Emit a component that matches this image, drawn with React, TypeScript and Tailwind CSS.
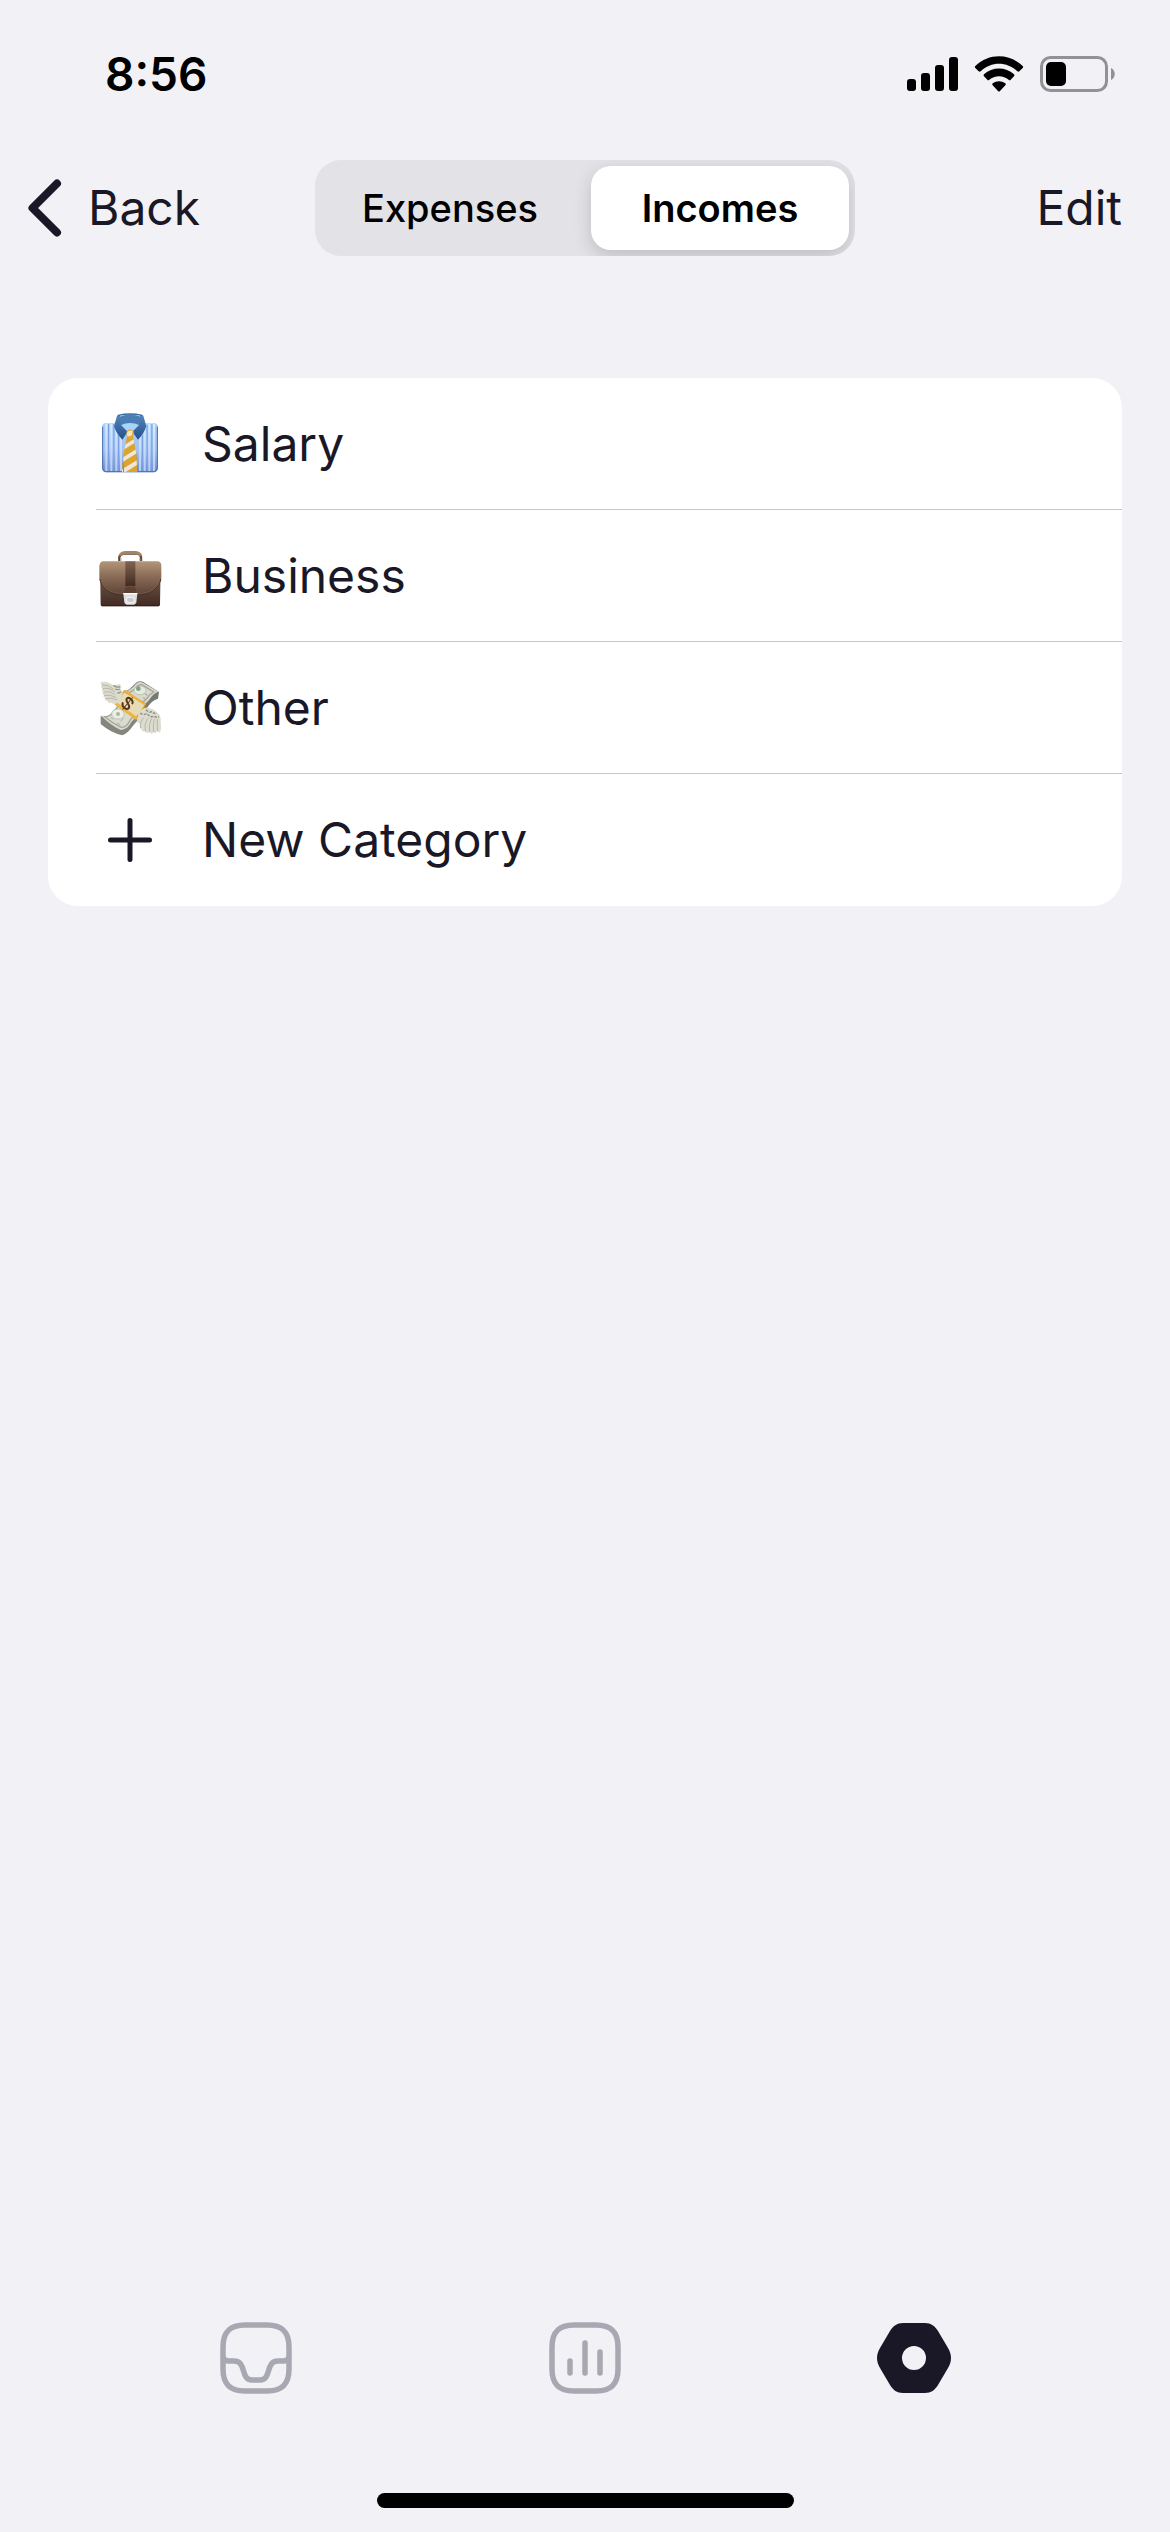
import React from "react";

function SignalIcon() {
  return (
    <svg width="51" height="34" viewBox="0 0 51 34" aria-hidden="true">
      <rect x="0" y="22" width="9" height="12" rx="3" />
      <rect x="14" y="16" width="9" height="18" rx="3" />
      <rect x="28" y="8" width="9" height="26" rx="3" />
      <rect x="42" y="0" width="9" height="34" rx="3" />
    </svg>
  );
}

function WifiIcon() {
  return (
    <svg width="50" height="36" viewBox="0 0 150 108" aria-hidden="true">
      <path d="M4 30C44 -9 106 -9 146 30Q149 33 146 36L136 46Q133 48 130 46C99 16 51 16 20 46Q17 48 14 46L4 36Q1 33 4 30Z" />
      <path d="M30 55C55 32 95 32 120 55Q123 58 120 61L110 71Q107 74 104 71C88 57 62 57 46 71Q43 74 40 71L30 61Q27 58 30 55Z" />
      <path d="M56 82C67 74 83 74 94 82Q97 85 94 88L78 105Q75 108 72 105L56 88Q53 85 56 82Z" />
    </svg>
  );
}

function BatteryIcon() {
  return (
    <svg width="76" height="36" viewBox="0 0 76 36" aria-hidden="true">
      <rect x="1.5" y="1.5" width="65" height="33" rx="9" fill="none" stroke="#929295" strokeWidth="3" />
      <rect x="6" y="6" width="20" height="24" rx="5" />
      <path d="M71 12C76 14 76 22 71 24Z" fill="#929295" />
    </svg>
  );
}

function ShirtIcon() {
  return (
    <svg width="64" height="64" viewBox="53 36 192 192" aria-hidden="true">
      <defs>
        <linearGradient id="shirt" x1="0" y1="0" x2="0" y2="1">
          <stop offset="0" stopColor="#a9d0fb" />
          <stop offset="0.55" stopColor="#a3c3f3" />
          <stop offset="1" stopColor="#6f8fcf" />
        </linearGradient>
        <linearGradient id="stripe" x1="0" y1="0" x2="0" y2="1">
          <stop offset="0" stopColor="#d4ecff" />
          <stop offset="1" stopColor="#b9cdf6" />
        </linearGradient>
        <linearGradient id="collar" x1="0" y1="0" x2="0" y2="1">
          <stop offset="0" stopColor="#5586ba" />
          <stop offset="1" stopColor="#244f8b" />
        </linearGradient>
        <clipPath id="tie">
          <path d="M140 110H158L168 160L173 216H125L130 160Z" />
        </clipPath>
      </defs>
      <path d="M74 70H223Q233 71 233 82V204Q232 216 221 217H76Q66 216 65 204V82Q65 71 74 70Z" fill="url(#shirt)" />
      <path d="M75 72h6v143h-6zM90 72h6v143h-6zM105 76h6v139h-6zM119 106h6v109h-6zM176 106h6v109h-6zM190 76h6v139h-6zM204 72h6v143h-6zM218 72h6v143h-6z" fill="url(#stripe)" />
      <path d="M83 72h3v143h-3zM99 72h3v143h-3zM113 106h3v109h-3zM185 106h3v109h-3zM199 76h3v139h-3zM213 72h3v143h-3z" fill="#7c9fe0" />
      <path d="M67 80V204Q68 214 77 215H221Q230 213 231 204V80" fill="none" stroke="#496ba9" strokeWidth="3" />
      <path d="M113 52Q149 35 186 52L178 77L149 91L119 77Z" fill="#4b7eb5" />
      <path d="M121 76Q149 62 178 76L158 92H140Z" fill="#a7d4fa" />
      <path d="M110 47Q115 42 119 46L121 74L142 95L126 119Q108 101 101 79Z" fill="url(#collar)" />
      <path d="M189 47Q184 42 179 46L177 74L156 95L173 119Q191 101 198 79Z" fill="url(#collar)" />
      <path d="M114 46Q149 38 185 46" fill="none" stroke="#356aa5" strokeWidth="4" />
      <path d="M140 110H158L168 160L173 216H125L130 160Z" fill="#d9a52e" />
      <g clipPath="url(#tie)">
        <path d="M120 143L167 113V126L120 155ZM120 177L174 143V157L120 191ZM120 211L177 176V190L130 220H120Z" fill="#eee6d8" />
        <path d="M126 170L130 217M170 160L172 217" stroke="#b77c18" strokeWidth="3" />
      </g>
      <path d="M139 94Q149 82 160 94Q162 105 156 115Q149 119 142 114Q136 104 139 94Z" fill="#dfaa32" />
      <path d="M140 98Q148 87 157 94L155 104Q149 111 141 108Z" fill="#f1e4c5" />
    </svg>
  );
}

function BriefcaseIcon() {
  return (
    <svg width="64" height="64" viewBox="53 27 192 192" aria-hidden="true">
      <defs>
        <linearGradient id="flap" x1="0" y1="0" x2="0" y2="1">
          <stop offset="0" stopColor="#b29679" />
          <stop offset="0.45" stopColor="#8a6b57" />
          <stop offset="1" stopColor="#5c4337" />
        </linearGradient>
        <linearGradient id="bag" x1="0" y1="0" x2="0" y2="1">
          <stop offset="0" stopColor="#8a6d58" />
          <stop offset="1" stopColor="#3f2a23" />
        </linearGradient>
        <linearGradient id="strap" x1="0" y1="0" x2="0" y2="1">
          <stop offset="0" stopColor="#806351" />
          <stop offset="1" stopColor="#3f2a20" />
        </linearGradient>
      </defs>
      <path d="M117 78V66Q120 56 131 56H169Q180 56 182 66V78" fill="none" stroke="#5c4638" strokeWidth="7" />
      <path d="M114 64Q118 49 134 48H166Q182 49 186 64L176 62Q171 57 162 57H138Q129 57 124 62Z" fill="#a98262" />
      <path d="M122 77v-7M178 77v-7" stroke="#c6bdb4" strokeWidth="4" />
      <path d="M66 82H234Q241 85 241 94L239 209Q239 214 233 214H67Q61 214 61 209L59 94Q59 85 66 82Z" fill="url(#bag)" />
      <path d="M66 79H234Q243 82 243 92V128Q236 174 184 180H116Q64 174 57 128V92Q58 82 66 79Z" fill="url(#flap)" />
      <path d="M58 132Q68 174 116 180H184Q232 174 242 132" fill="none" stroke="#443027" strokeWidth="3" />
      <path d="M61 137Q71 169 116 175H184Q229 169 239 137" fill="none" stroke="#8d7161" strokeWidth="1" />
      <path d="M135 79H165V154H135Z" fill="url(#strap)" />
      <path d="M130 177V166Q133 154 143 154H157Q168 154 170 166V177Z" fill="#5c4033" stroke="#765746" strokeWidth="2" />
      <path d="M129 175H171L168 202Q167 208 161 209H139Q133 208 132 202Z" fill="#dedfdf" />
      <rect x="138" y="187" width="24" height="16" rx="8" fill="#c9cbcb" stroke="#f6f6f6" strokeWidth="3" />
      <path d="M129 176H171" stroke="#fff" strokeWidth="4" />
      <path d="M64 212H236" stroke="#30201b" strokeWidth="3" />
    </svg>
  );
}

function MoneyIcon() {
  return (
    <svg width="64" height="64" viewBox="53 33 192 192" aria-hidden="true">
      <path d="M61 152Q80 165 95 144Q112 123 131 104L190 153Q170 166 158 182Q144 203 126 211Q91 203 61 177Z" fill="#85877e" />
      <path d="M131 82Q151 72 164 56Q174 45 189 51L236 81L233 101Q217 105 207 119L187 145Z" fill="#777a72" />
      <path d="M61 151Q80 162 96 140Q110 118 128 103L177 151Q158 161 149 178Q139 194 121 195Q91 182 61 151Z" fill="#dadbd1" />
      <path d="M133 83Q152 75 166 58Q174 48 188 53L234 80Q217 87 208 103Q199 117 184 119Z" fill="#d7d8ce" />
      <path d="M73 155Q88 156 101 139L121 116L163 151Q149 163 143 176Q136 187 122 187Q97 175 73 155Z" fill="none" stroke="#a3a69b" strokeWidth="4" />
      <path d="M145 83Q160 78 173 61L185 59L220 81Q206 88 199 101Q191 112 180 111Z" fill="none" stroke="#a3a69b" strokeWidth="4" />
      <ellipse cx="113" cy="147" rx="19" ry="15" fill="#eeeee4" stroke="#aeb0a4" strokeWidth="2" />
      <circle cx="113" cy="147" r="6" fill="#a4baa2" />
      <path d="M91 157l8 6M129 160l-8 9M110 174l10 5" stroke="#a9ada1" strokeWidth="3" />
      <ellipse cx="179" cy="76" rx="18" ry="13" fill="#e8e9df" stroke="#b1b4a7" strokeWidth="2" />
      <circle cx="174" cy="71" r="7" fill="#79a583" />
      <path d="M193 86l9 5M188 98l7 3" stroke="#a0a499" strokeWidth="3" />
      <path d="M103 118L131 76L196 115L190 137L167 164Z" fill="#d69a25" />
      <path d="M110 114L132 82L193 120L167 156Z" fill="#e8dab2" />
      <path d="M103 118L167 164L173 158L107 111ZM130 77L194 122L197 116L135 74Z" fill="#eeb43e" />
      <g transform="translate(142 115) rotate(40)" fill="none" stroke="#57391c" strokeLinecap="round">
        <path d="M11 -9C8 -19 -11 -18 -11 -9C-11 1 12 -2 12 9C12 19 -9 19 -12 9" strokeWidth="6" />
        <path d="M0 -22V23" strokeWidth="3" />
      </g>
      <path d="M120 71Q124 63 119 57L99 61Q80 47 64 51Q57 56 65 61Q59 66 67 71Q62 77 69 81Q64 87 71 90Q66 96 75 99Q69 106 82 108Q81 116 93 113Q102 121 115 111L126 91Q129 78 120 71Z" fill="#dcdbcf" />
      <path d="M65 60Q85 59 99 72M67 71Q87 66 104 81M69 82Q89 76 104 89M71 91Q90 87 108 98M77 101Q92 96 111 105" fill="none" stroke="#b8b6a7" strokeWidth="3" />
      <path d="M99 61Q111 69 120 65M104 72Q113 76 119 72M111 84Q118 84 122 80" fill="none" stroke="#9b988a" strokeWidth="4" />
      <path d="M174 149Q170 141 180 136Q196 124 207 129Q223 133 235 146Q242 153 241 168Q243 181 241 199Q236 206 230 198Q227 208 219 201Q214 211 207 201Q198 209 194 198Q184 204 183 190Q176 188 179 176Q168 174 170 163Z" fill="#dddcd0" />
      <path d="M190 158Q178 170 181 190M202 160Q190 178 195 199M213 161Q204 180 208 201M222 161Q217 182 220 201M231 162Q231 182 231 198" fill="none" stroke="#b8b6a7" strokeWidth="3" />
      <path d="M180 144Q189 153 199 145Q211 160 221 153Q229 160 236 155M197 134Q205 145 214 140Q222 147 230 145" fill="none" stroke="#8f8c7d" strokeWidth="4" strokeDasharray="8 4" />
    </svg>
  );
}

function PlusIcon() {
  return (
    <svg width="64" height="64" viewBox="0 0 64 64" aria-hidden="true">
      <path d="M32 12.5V51.5M12.5 32H51.5" stroke="#1a1826" strokeWidth="5" strokeLinecap="round" />
    </svg>
  );
}

const squircle =
  "M25 3H47C62 3 69 10 69 25V47C69 62 62 69 47 69H25C10 69 3 62 3 47V25C3 10 10 3 25 3Z";

function InboxIcon() {
  return (
    <svg width="72" height="72" viewBox="0 0 72 72" fill="none" stroke="#a8a8b3" strokeWidth="5.5" aria-hidden="true">
      <path d={squircle} />
      <path d="M3 35Q4 39 9 39H14C27 39 20 58 32 58H40C52 58 45 39 58 39H63Q68 39 69 35" />
    </svg>
  );
}

function ChartIcon() {
  return (
    <svg width="72" height="72" viewBox="0 0 72 72" fill="none" stroke="#a8a8b3" strokeWidth="5.5" strokeLinecap="round" aria-hidden="true">
      <path d={squircle} />
      <path d="M21 39V51M36 21V51M51 30V51" />
    </svg>
  );
}

function SettingsIcon() {
  return (
    <svg width="74" height="70" viewBox="0 0 74 70" aria-hidden="true">
      <path
        fill="#1a1826"
        fillRule="evenodd"
        d="M26 0H48C54 0 58 3 61 8L71 25C75 32 75 38 71 45L61 62C58 67 54 70 48 70H26C20 70 16 67 13 62L3 45C-1 38 -1 32 3 25L13 8C16 3 20 0 26 0ZM37 23A12 12 0 1 0 37 47A12 12 0 1 0 37 23Z"
      />
    </svg>
  );
}

const rows = [
  { label: "Salary", icon: <ShirtIcon /> },
  { label: "Business", icon: <BriefcaseIcon /> },
  { label: "Other", icon: <MoneyIcon /> },
  { label: "New Category", icon: <PlusIcon /> },
];

const tabs = [
  { label: "Inbox", icon: <InboxIcon /> },
  { label: "Statistics", icon: <ChartIcon /> },
  { label: "Settings", icon: <SettingsIcon /> },
];

export default function App() {
  return (
    <div className="flex min-h-screen flex-col bg-[#f2f1f6] font-['Inter',sans-serif] text-[#1a1826]">
      <div className="flex h-[148px] items-center justify-between pr-[54px] pl-[105px] text-black">
        <time className="text-[46px] leading-none font-semibold">8:56</time>
        <div className="flex items-center gap-4">
          <SignalIcon />
          <WifiIcon />
          <BatteryIcon />
        </div>
      </div>

      <header className="flex h-[120px] items-center px-7">
        <div className="flex flex-1">
          <button type="button" className="flex items-center gap-[26px] text-[48px] leading-none">
            <svg width="34" height="58" viewBox="0 0 34 58" fill="none" aria-hidden="true">
              <path d="M29 4.500L4.500 29L29 53.500" stroke="#1a1826" strokeWidth="8" strokeLinecap="round" strokeLinejoin="round" />
            </svg>
            Back
          </button>
        </div>
        <div className="grid h-24 w-full max-w-[540px] grid-cols-2 gap-3 overflow-hidden rounded-[26px] bg-[#e3e2e7] p-1.5 text-[38px] font-medium text-black">
          <button type="button" aria-pressed="false" className="rounded-[20px]">
            Expenses
          </button>
          <button
            type="button"
            aria-pressed="true"
            className="rounded-[20px] bg-white font-semibold shadow-[0_6px_18px_rgba(0,0,0,0.16)]"
          >
            Incomes
          </button>
        </div>
        <div className="flex flex-1 justify-end">
          <button type="button" className="mr-5 text-[48px] leading-none">
            Edit
          </button>
        </div>
      </header>

      <main className="flex-1 px-12 pt-[110px]">
        <ul className="overflow-hidden rounded-[30px] bg-white">
          {rows.map((row, i) => (
            <li key={row.label}>
              <button type="button" className="flex h-[132px] w-full flex-col pl-12 text-left text-[48px] leading-none">
                <span className="flex w-full flex-1 items-center gap-10 pl-0.5">
                  {row.icon}
                  {row.label}
                </span>
                {i < rows.length - 1 && <span className="h-px w-full bg-[#c6c6c8]" />}
              </button>
            </li>
          ))}
        </ul>
      </main>

      <nav className="flex items-center px-[92px] pb-[99px]">
        {tabs.map((tab) => (
          <button key={tab.label} type="button" aria-label={tab.label} className="flex h-[72px] flex-1 items-center justify-center">
            {tab.icon}
          </button>
        ))}
      </nav>
      <div className="mx-auto mb-6 h-[15px] w-full max-w-[417px] rounded-full bg-black" />
    </div>
  );
}
